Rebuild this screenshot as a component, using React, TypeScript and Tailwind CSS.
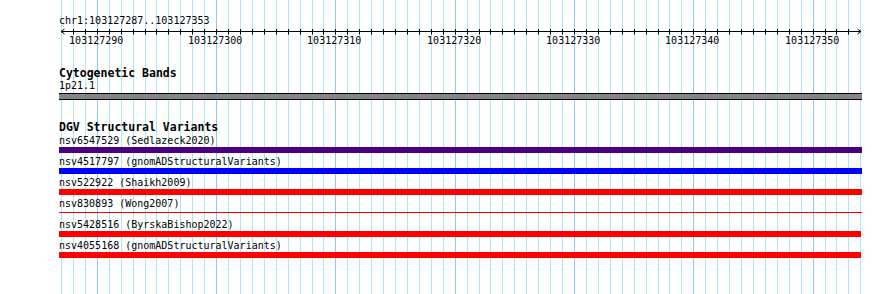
import React from "react";

const BP = 11.93;
const X0 = 61;
const xs = Array.from({ length: 68 }, (_, k) => Math.round(X0 + BP * k));

const rows = [
  { label: "nsv6547529 (Sedlazeck2020)", color: "bg-[#4b0082]", w: "w-[803px]", thin: false },
  { label: "nsv4517797 (gnomADStructuralVariants)", color: "bg-[#0000ff]", w: "w-[803px]", thin: false },
  { label: "nsv522922 (Shaikh2009)", color: "bg-[#ff0000]", w: "w-[803px]", thin: false },
  { label: "nsv830893 (Wong2007)", color: "bg-[#ff0000]", w: "w-[803px]", thin: true },
  { label: "nsv5428516 (ByrskaBishop2022)", color: "bg-[#ff0000]", w: "w-[802px]", thin: false },
  { label: "nsv4055168 (gnomADStructuralVariants)", color: "bg-[#ff0000]", w: "w-[802px]", thin: false },
];

function Grid() {
  return (
    <svg className="absolute left-0 top-0" width={890} height={294}>
      {xs.map((x, k) => (
        <line
          key={k}
          x1={x + 0.5}
          x2={x + 0.5}
          y1={0}
          y2={294}
          stroke={(k - 3) % 10 === 0 ? "#8bcbe9" : "#ade7ef"}
          strokeWidth={1}
        />
      ))}
    </svg>
  );
}

function Ruler() {
  return (
    <svg width={890} height={20} className="block">
      <line x1={61} x2={861} y1={4.5} y2={4.5} stroke="#000" strokeWidth={1} />
      <polyline points="64.5,2 61,4.5 64.5,7" fill="none" stroke="#000" strokeWidth={1} />
      <polyline points="857.5,2 861,4.5 857.5,7" fill="none" stroke="#000" strokeWidth={1} />
      {xs.slice(1, 67).map((x, i) => (
        <line key={i} x1={x + 0.5} x2={x + 0.5} y1={2} y2={7.5} stroke="#000" strokeWidth={1} />
      ))}
      {xs.map((x, k) =>
        (k - 3) % 10 === 0 ? (
          <text
            key={"t" + k}
            x={x - 0.8}
            y={16.5}
            textAnchor="middle"
            fontSize={10}
            fontFamily="'DejaVu Sans Mono', monospace"
            fill="#000"
          >
            {103127287 + k}
          </text>
        ) : null
      )}
    </svg>
  );
}

export default function App() {
  return (
    <div className="relative w-[890px] h-[294px] overflow-hidden bg-white text-black font-['DejaVu_Sans_Mono',monospace]">
      <Grid />
      <div className="relative flex flex-col pt-[15px]">
        <div className="pl-[59px] h-[12px] text-[10px] leading-[12px]">chr1:103127287..103127353</div>
        <Ruler />
        <div className="mt-[20px] pl-[59px] h-[13px] text-[11.5px] leading-[13px] font-bold">Cytogenetic Bands</div>
        <div className="pl-[59px] h-[12px] text-[10px] leading-[12px]">1p21.1</div>
        <div className="ml-[59px] mt-[1px] w-[803px] h-[7px] border-y border-black bg-[#868486]" />
        <div className="mt-[21px] pl-[59px] h-[13px] text-[11.5px] leading-[13px] font-bold">DGV Structural Variants</div>
        <div className="mt-[1px] ml-[59px] flex flex-col">
          {rows.map((r) => (
            <div key={r.label} className="flex flex-col mb-[3px]">
              <div className="h-[12px] text-[10px] leading-[12px] whitespace-nowrap">{r.label}</div>
              <div className="h-[6px] flex flex-col">
                {r.thin ? (
                  <div className={`mt-[2px] h-[1px] ${r.w} ${r.color}`} />
                ) : (
                  <div className={`h-[6px] ${r.w} ${r.color}`} />
                )}
              </div>
            </div>
          ))}
        </div>
      </div>
    </div>
  );
}
